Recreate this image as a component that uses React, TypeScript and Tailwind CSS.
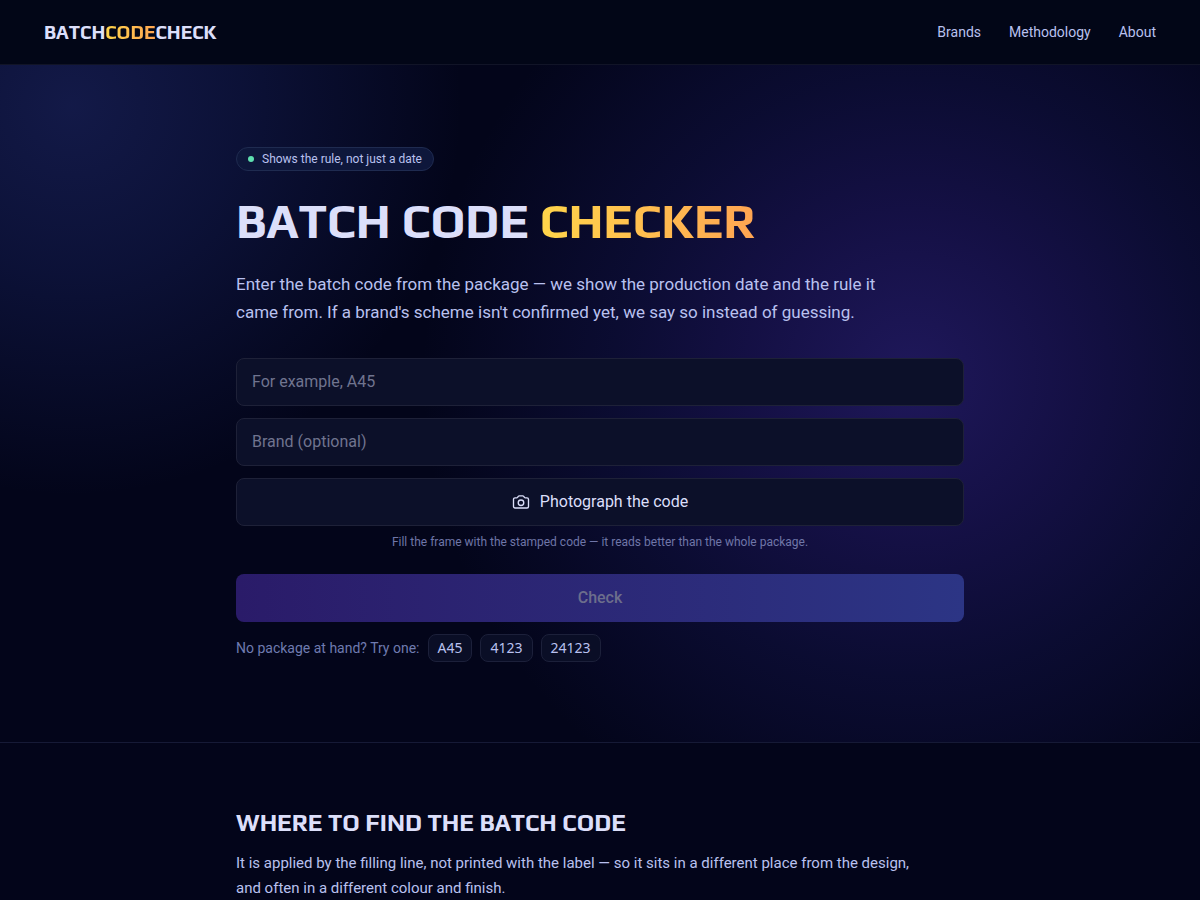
const display = "font-['Play','Inter',sans-serif]";
const gold = 'bg-linear-to-r from-[#ffd54a] to-[#ffa552] bg-clip-text text-transparent';
const field =
  'h-12 w-full rounded-lg border border-[#1e2138] bg-[#0c1029] px-[15px] pb-0.5 text-base text-[#dcdffa] placeholder:text-[#70748f] outline-none focus:border-[#5b5fd0]';
const samples = ['A45', '4123', '24123'];

function CameraIcon() {
  return (
    <svg
      viewBox="0 0 24 24"
      className="size-[18px]"
      fill="none"
      stroke="currentColor"
      strokeWidth="1.8"
      strokeLinecap="round"
      strokeLinejoin="round"
      aria-hidden="true"
    >
      <path d="M2 8.5a2 2 0 0 1 2-2h2.2a1.5 1.5 0 0 0 1.2-.6l1-1.4a1.7 1.7 0 0 1 1.4-.7h4.4a1.7 1.7 0 0 1 1.4.7l1 1.4a1.5 1.5 0 0 0 1.2.6H20a2 2 0 0 1 2 2V18a2 2 0 0 1-2 2H4a2 2 0 0 1-2-2z" />
      <circle cx="12" cy="13" r="3.7" />
    </svg>
  );
}

function Header() {
  return (
    <header className="flex h-[65px] items-center justify-between border-b border-[#111427] bg-[#020617] px-11">
      <a href="#" className={`${display} text-[19px] leading-6 font-bold text-[#dcdffa]`}>
        BATCH<span className={gold}>CODE</span>CHECK
      </a>
      <nav className="flex gap-7 text-sm text-[#b9c1ef]">
        <a href="#brands">Brands</a>
        <a href="#methodology">Methodology</a>
        <a href="#about">About</a>
      </nav>
    </header>
  );
}

function Hero() {
  return (
    <section className="border-b border-[#161a36] bg-[radial-gradient(circle_at_76%_46%,rgba(84,60,215,0.34)_0,rgba(68,46,185,0.27)_160px,rgba(50,46,165,0.17)_300px,transparent_490px),radial-gradient(circle_at_6%_6%,rgba(60,78,190,0.28)_0,rgba(50,70,180,0.19)_170px,transparent_390px)] px-6 pt-[82px] pb-20">
      <div className="mx-auto max-w-[728px]">
        <p className="flex h-6 w-fit items-center gap-2 rounded-full border border-[#1f2b50] bg-[#0e173b] px-[11px] text-xs text-[#b9c1ef]">
          <span className="size-1.5 rounded-full bg-[#5fe0b0]" />
          Shows the rule, not just a date
        </p>
        <h1 className={`${display} mt-6 text-5xl leading-[53px] font-bold text-[#dcdffa]`}>
          BATCH CODE <span className={gold}>CHECKER</span>
        </h1>
        <p className="mt-[22px] max-w-[650px] text-[17px] leading-7 text-[#b9c1ef]">
          Enter the batch code from the package — we show the production date and the rule it came from. If a
          brand's scheme isn't confirmed yet, we say so instead of guessing.
        </p>
        <form className="mt-8 flex flex-col" onSubmit={(e) => e.preventDefault()}>
          <div className="flex flex-col gap-3">
            <input aria-label="Batch code" placeholder="For example, A45" className={field} />
            <input aria-label="Brand" placeholder="Brand (optional)" className={field} />
            <button
              type="button"
              className="flex h-12 items-center justify-center gap-2.5 rounded-lg border border-[#1e2138] bg-[#0c1029] text-base text-[#dcdffa]"
            >
              <CameraIcon />
              Photograph the code
            </button>
          </div>
          <p className="mt-2 text-center text-xs leading-4 text-[#6f76a8]">
            Fill the frame with the stamped code — it reads better than the whole package.
          </p>
          <button
            type="submit"
            disabled
            className="mt-6 h-12 rounded-lg bg-linear-to-r from-[#2a1b69] to-[#2c3585] text-base font-medium text-[#6c6e8c]"
          >
            Check
          </button>
        </form>
        <div className="mt-3 flex flex-wrap items-center gap-2 text-sm text-[#6f7bb0]">
          <span>No package at hand? Try one:</span>
          {samples.map((code) => (
            <button
              key={code}
              type="button"
              className="h-7 rounded-lg border border-[#1c203a] bg-[#0a0e26] px-[9px] font-['Noto_Sans',sans-serif] text-[#b9c1ef]"
            >
              {code}
            </button>
          ))}
        </div>
      </div>
    </section>
  );
}

function WhereToFind() {
  return (
    <section className="px-6 pt-16 pb-16">
      <div className="mx-auto max-w-[728px]">
        <h2 className={`${display} text-2xl leading-8 font-bold text-[#dcdffa]`}>WHERE TO FIND THE BATCH CODE</h2>
        <p className="mt-3 max-w-[680px] text-[15px] leading-[25px] text-[#b9c1ef]">
          It is applied by the filling line, not printed with the label — so it sits in a different place from the
          design, and often in a different colour and finish.
        </p>
      </div>
    </section>
  );
}

export default function App() {
  return (
    <div className="min-h-screen bg-[#03051a] font-['Roboto',sans-serif]">
      <Header />
      <main>
        <Hero />
        <WhereToFind />
      </main>
    </div>
  );
}
